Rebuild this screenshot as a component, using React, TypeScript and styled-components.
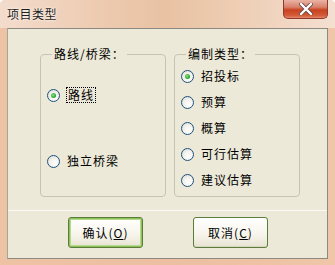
import React from "react";
import styled, { createGlobalStyle } from "styled-components";

const GlobalStyle = createGlobalStyle`
  html, body {
    margin: 0;
    padding: 0;
    background: #ffffff;
  }
  body {
    font-family: "Noto Sans CJK SC", "DejaVu Sans", sans-serif;
    font-size: 12px;
    color: #000;
  }
`;

const Window = styled.div`
  width: 335px;
  height: 265px;
  box-sizing: border-box;
  display: flex;
  flex-direction: column;
  background: linear-gradient(90deg, #eec3a4 0%, #ebbf9f 50%, #efc6a8 100%);
  border-radius: 5px 5px 0 0;
  overflow: hidden;
`;

const TitleBar = styled.div`
  height: 28px;
  flex: none;
  display: flex;
  align-items: flex-start;
  justify-content: space-between;
  background: linear-gradient(
    90deg,
    #f3dccc 0%,
    #ecc8ac 35%,
    #e9c2a3 50%,
    #eecdb3 70%,
    #f4dfd1 100%
  );
`;

const Title = styled.div`
  padding: 6px 0 0 7px;
  font-size: 12px;
  line-height: 16px;
  letter-spacing: 0.5px;
  color: #1e1e1e;
  text-shadow: 0 0 3px #fff6ee, 0 0 2px #fff6ee;
`;

const CloseButton = styled.div`
  width: 45px;
  height: 19px;
  margin-right: 7px;
  box-sizing: border-box;
  border: 1px solid #8e3a2c;
  border-top: none;
  border-radius: 0 0 5px 5px;
  background: linear-gradient(
    180deg,
    #eab3a4 0%,
    #d9806a 40%,
    #c8421f 55%,
    #d35a36 85%,
    #e2876a 100%
  );
  display: flex;
  align-items: center;
  justify-content: center;
`;

const Client = styled.div`
  flex: 1;
  margin: 0 7px 6px 7px;
  border: 1px solid #8c8a82;
  border-left-color: #a7a59c;
  background: #ece9d8;
  display: flex;
  flex-direction: column;
`;

const Groups = styled.div`
  height: 181px;
  flex: none;
  display: flex;
  gap: 8px;
  padding: 18px 0 0 32px;
  box-sizing: border-box;
`;

const Group = styled.fieldset`
  margin: 0;
  width: 126px;
  height: 150px;
  box-sizing: border-box;
  border: 1px solid #c6c3b4;
  border-radius: 4px;
  padding: 0 0 0 6px;
  display: flex;
  flex-direction: column;
`;

const Legend = styled.legend`
  padding: 0 2px;
  margin-left: 5px;
  font-size: 12px;
  line-height: 14px;
  letter-spacing: 1px;
`;

const Options = styled.div<{ $top: number; $gap: number }>`
  display: flex;
  flex-direction: column;
  padding-top: ${(p) => p.$top}px;
  gap: ${(p) => p.$gap}px;
`;

const Row = styled.label`
  height: 26px;
  display: flex;
  align-items: center;
  gap: 6px;
`;

const Circle = styled.span<{ $checked: boolean }>`
  width: 13px;
  height: 13px;
  flex: none;
  box-sizing: border-box;
  border-radius: 50%;
  border: 1px solid #1d5281;
  background: radial-gradient(
    circle at 60% 65%,
    #ffffff 0%,
    #f4f3ee 45%,
    #d8d6cc 100%
  );
  display: flex;
  align-items: center;
  justify-content: center;
  &::after {
    content: "";
    width: 5px;
    height: 5px;
    border-radius: 50%;
    background: ${(p) =>
      p.$checked
        ? "radial-gradient(circle at 40% 40%, #8be28b 0%, #21a121 70%)"
        : "transparent"};
  }
`;

const Text = styled.span<{ $focus?: boolean }>`
  font-size: 12px;
  line-height: 14px;
  letter-spacing: 1px;
  padding: 0 1px;
  margin-left: ${(p) => (p.$focus ? "1px" : "0")};
  outline: ${(p) => (p.$focus ? "1px dotted #000" : "none")};
  outline-offset: 0;
`;

const Separator = styled.div`
  height: 1px;
  flex: none;
  background: #fbfaf6;
`;

const Buttons = styled.div`
  flex: 1;
  display: flex;
  align-items: flex-start;
  gap: 50px;
  padding: 6px 0 0 60px;
`;

const Button = styled.button<{ $default?: boolean }>`
  width: 75px;
  height: 31px;
  box-sizing: border-box;
  border: 1px solid #5b7d3a;
  border-radius: 3px;
  padding: 0;
  font-family: "Noto Sans CJK SC", "DejaVu Sans", sans-serif;
  font-size: 12px;
  letter-spacing: 1px;
  color: #000;
  background: linear-gradient(180deg, #ffffff 0%, #f6f4ea 60%, #e7e3d2 100%);
  box-shadow: ${(p) =>
    p.$default
      ? "inset 0 0 0 1px #8cc05a, inset 0 0 0 2px #b7d98c"
      : "inset 0 -1px 0 #d8d4c2"};
`;

const Key = styled.span`
  text-decoration: underline;
`;

type Option = { label: string; checked?: boolean; focus?: boolean };

const routeOptions: Option[] = [
  { label: "路线", checked: true, focus: true },
  { label: "独立桥梁" },
];

const typeOptions: Option[] = [
  { label: "招投标", checked: true },
  { label: "预算" },
  { label: "概算" },
  { label: "可行估算" },
  { label: "建议估算" },
];

const Radio: React.FC<{ option: Option }> = ({ option }) => (
  <Row>
    <Circle $checked={!!option.checked} />
    <Text $focus={option.focus}>{option.label}</Text>
  </Row>
);

const CloseIcon = () => (
  <svg width="14" height="12" viewBox="0 0 14 12">
    <path
      d="M2 1 L12 11 M12 1 L2 11"
      stroke="#6b4a48"
      strokeWidth="4"
      strokeLinecap="round"
    />
    <path
      d="M2 1 L12 11 M12 1 L2 11"
      stroke="#ffffff"
      strokeWidth="2.4"
      strokeLinecap="round"
    />
  </svg>
);

const App: React.FC = () => {
  return (
    <>
      <GlobalStyle />
      <Window>
        <TitleBar>
          <Title>项目类型</Title>
          <CloseButton>
            <CloseIcon />
          </CloseButton>
        </TitleBar>
        <Client>
          <Groups>
            <Group>
              <Legend>路线/桥梁：</Legend>
              <Options $top={21} $gap={40}>
                {routeOptions.map((o) => (
                  <Radio key={o.label} option={o} />
                ))}
              </Options>
            </Group>
            <Group>
              <Legend>编制类型：</Legend>
              <Options $top={2} $gap={0}>
                {typeOptions.map((o) => (
                  <Radio key={o.label} option={o} />
                ))}
              </Options>
            </Group>
          </Groups>
          <Separator />
          <Buttons>
            <Button $default>
              确认(<Key>O</Key>)
            </Button>
            <Button>
              取消(<Key>C</Key>)
            </Button>
          </Buttons>
        </Client>
      </Window>
    </>
  );
};

export default App;
